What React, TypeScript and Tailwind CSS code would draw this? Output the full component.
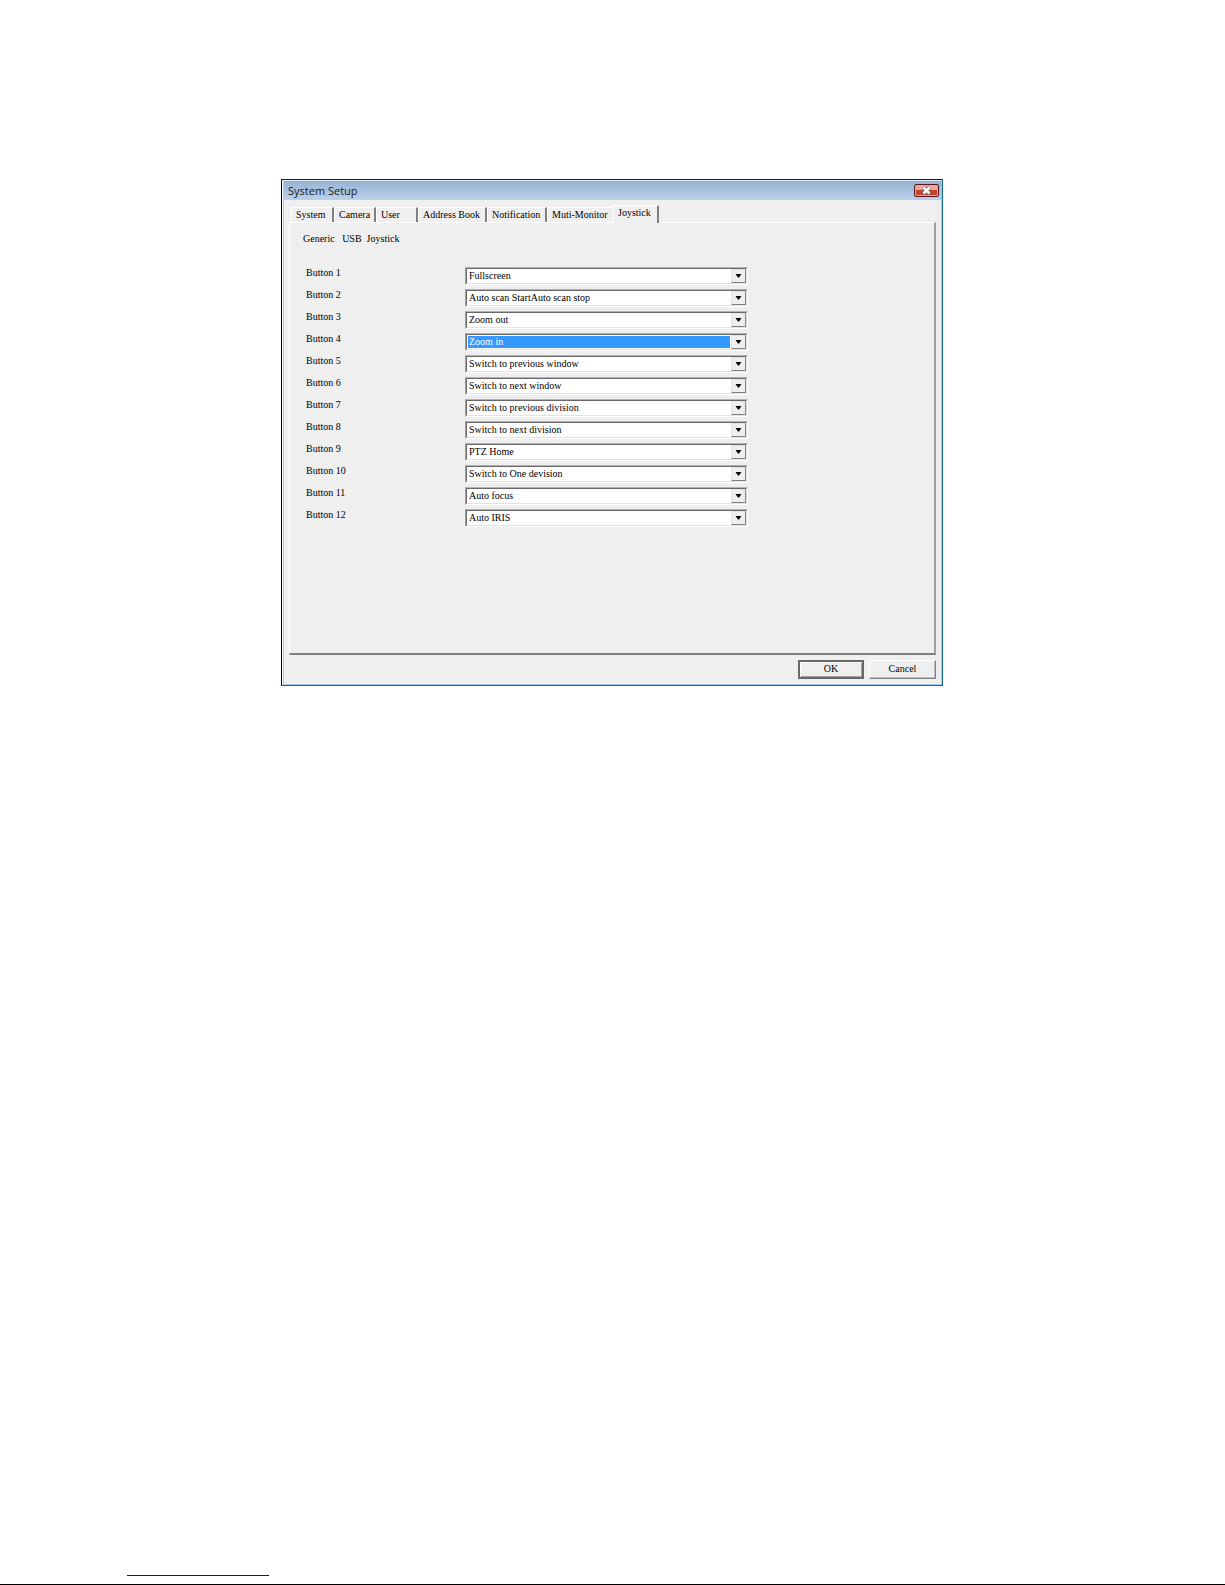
import React, { useState } from 'react';

const tabs = [
  { name: 'System', width: 'w-[43px]' },
  { name: 'Camera', width: 'w-[42px]' },
  { name: 'User', width: 'w-[42px]' },
  { name: 'Address Book', width: 'w-[69px]' },
  { name: 'Notification', width: 'w-[60px]' },
  { name: 'Muti-Monitor', width: 'w-[66px]' },
  { name: 'Joystick', width: 'w-[46px]' },
];

const actions = [
  'Fullscreen',
  'Auto scan StartAuto scan stop',
  'Zoom out',
  'Zoom in',
  'Switch to previous window',
  'Switch to next window',
  'Switch to previous division',
  'Switch to next division',
  'PTZ Home',
  'Switch to One devision',
  'Auto focus',
  'Auto IRIS',
];

function TitleBar() {
  return (
    <header className="flex h-[19px] items-center justify-between bg-linear-to-b from-[#98b3d2] to-[#b9d1ea] pr-[2px] pl-1">
      <h1 className="font-['Open_Sans',sans-serif] text-[11px] leading-[18px] text-[#1b1b1b]">System Setup</h1>
      <button
        type="button"
        aria-label="Close"
        className="flex h-[13px] w-[25px] items-center justify-center rounded-[2px] border border-[#5a1420] bg-linear-to-b from-[#e9a99b] from-45% to-[#c0452c] to-50% shadow-[inset_0_0_0_1px_#e8a598]"
      >
        <svg width="11" height="9" viewBox="0 0 11 9" aria-hidden="true">
          <path d="M2.5 1.5 L8.5 7.5 M8.5 1.5 L2.5 7.5" stroke="#5b5f70" strokeWidth="4" />
          <path d="M2.5 1.5 L8.5 7.5 M8.5 1.5 L2.5 7.5" stroke="#ffffff" strokeWidth="2.6" />
        </svg>
      </button>
    </header>
  );
}

function TabStrip({ active, onSelect }: { active: string; onSelect: (name: string) => void }) {
  return (
    <div role="tablist" className="flex h-[17px] items-end pl-[2px]">
      {tabs.map((tab, i) => {
        const selected = tab.name === active;
        const beforeSelected = tabs[i + 1]?.name === active;
        return (
          <button
            key={tab.name}
            type="button"
            role="tab"
            aria-selected={selected}
            onClick={() => onSelect(tab.name)}
            className={`flex shrink-0 border-t border-l border-white pl-1 text-left leading-[14px] whitespace-nowrap ${tab.width} ${
              selected ? 'relative -mb-px h-[18px] bg-[#efefef]' : 'h-[15px]'
            } ${beforeSelected ? '' : 'border-r-2 border-r-[#808080]'}`}
          >
            {tab.name}
          </button>
        );
      })}
    </div>
  );
}

function ActionSelect({ id, initial, highlighted }: { id: string; initial: string; highlighted: boolean }) {
  return (
    <div className="w-[283px] shrink-0 border border-t-[#b4b4b4] border-r-white border-b-white border-l-[#a0a0a0]">
      <div className="relative flex h-4 border border-t-[#696969] border-r-[#e3e3e3] border-b-[#e3e3e3] border-l-[#696969] bg-white">
        <select
          id={id}
          defaultValue={initial}
          className={`h-full w-full appearance-none border border-r-[16px] border-white pl-px leading-3 outline-none ${
            highlighted ? 'bg-[#3399ff] text-white' : 'bg-white'
          }`}
        >
          {actions.map((action) => (
            <option key={action} className="bg-white text-black">
              {action}
            </option>
          ))}
        </select>
        <span className="pointer-events-none absolute inset-y-0 right-0 flex w-[15px] items-center justify-center border border-t-[#e3e3e3] border-r-[#808080] border-b-[#808080] border-l-[#e3e3e3] bg-[#efefef]">
          <svg width="7" height="4" viewBox="0 0 7 4" aria-hidden="true">
            <path d="M0.5 0 H6.5 L4 3.5 H3 Z" fill="#000000" />
          </svg>
        </span>
      </div>
    </div>
  );
}

export default function App() {
  const [active, setActive] = useState('Joystick');
  return (
    <div className="flex min-h-screen flex-col border-b border-black bg-white font-['Liberation_Serif',serif] text-[10px] leading-[14px] text-black">
      <main className="mx-auto w-full max-w-[663px] grow pt-[179px] pr-px">
        <section className="border border-t-[#1f2328] border-r-[#14708a] border-b-[#1f6478] border-l-black">
          <div className="border border-t-[#dfe9f4] border-r-[#a9c8ee] border-b-[#a9c8ee] border-l-white bg-[#efefef]">
            <div className="border-l border-[#a9c8ee]">
              <TitleBar />
              <div className="p-[5px]">
                <TabStrip active={active} onSelect={setActive} />
                <div
                  role="tabpanel"
                  className="border-t border-r-2 border-b-2 border-l border-t-white border-r-[#a0a0a0] border-b-[#808080] border-l-white pb-[126px]"
                >
                  <p className="pt-[9px] pl-[13px] whitespace-pre">Generic   USB  Joystick</p>
                  <div className="mt-[21px] flex flex-col gap-1 pl-4">
                    {actions.map((action, i) => (
                      <div key={action} className="flex h-[18px] items-start">
                        <label htmlFor={`joystick-${i + 1}`} className="w-[159px] shrink-0 leading-3">
                          Button {i + 1}
                        </label>
                        <ActionSelect id={`joystick-${i + 1}`} initial={action} highlighted={i === 3} />
                      </div>
                    ))}
                  </div>
                </div>
                <div className="mt-[5px] flex justify-end gap-[5px]">
                  <button
                    type="button"
                    className="h-[19px] w-[66px] border-2 border-[#696969] pb-px leading-3 shadow-[inset_1px_1px_0_#ffffff,inset_-1px_-1px_0_#a0a0a0]"
                  >
                    OK
                  </button>
                  <button
                    type="button"
                    className="h-[19px] w-[67px] border border-t-white border-r-[#808080] border-b-[#808080] border-l-white pb-px leading-3 shadow-[inset_-1px_-1px_0_#c0c0c0]"
                  >
                    Cancel
                  </button>
                </div>
              </div>
            </div>
          </div>
        </section>
      </main>
      <footer className="flex pb-2 pl-[127px]">
        <a href="#" aria-label="Website" className="h-3 w-[142px] border-b border-[#0000ff]" />
      </footer>
    </div>
  );
}
